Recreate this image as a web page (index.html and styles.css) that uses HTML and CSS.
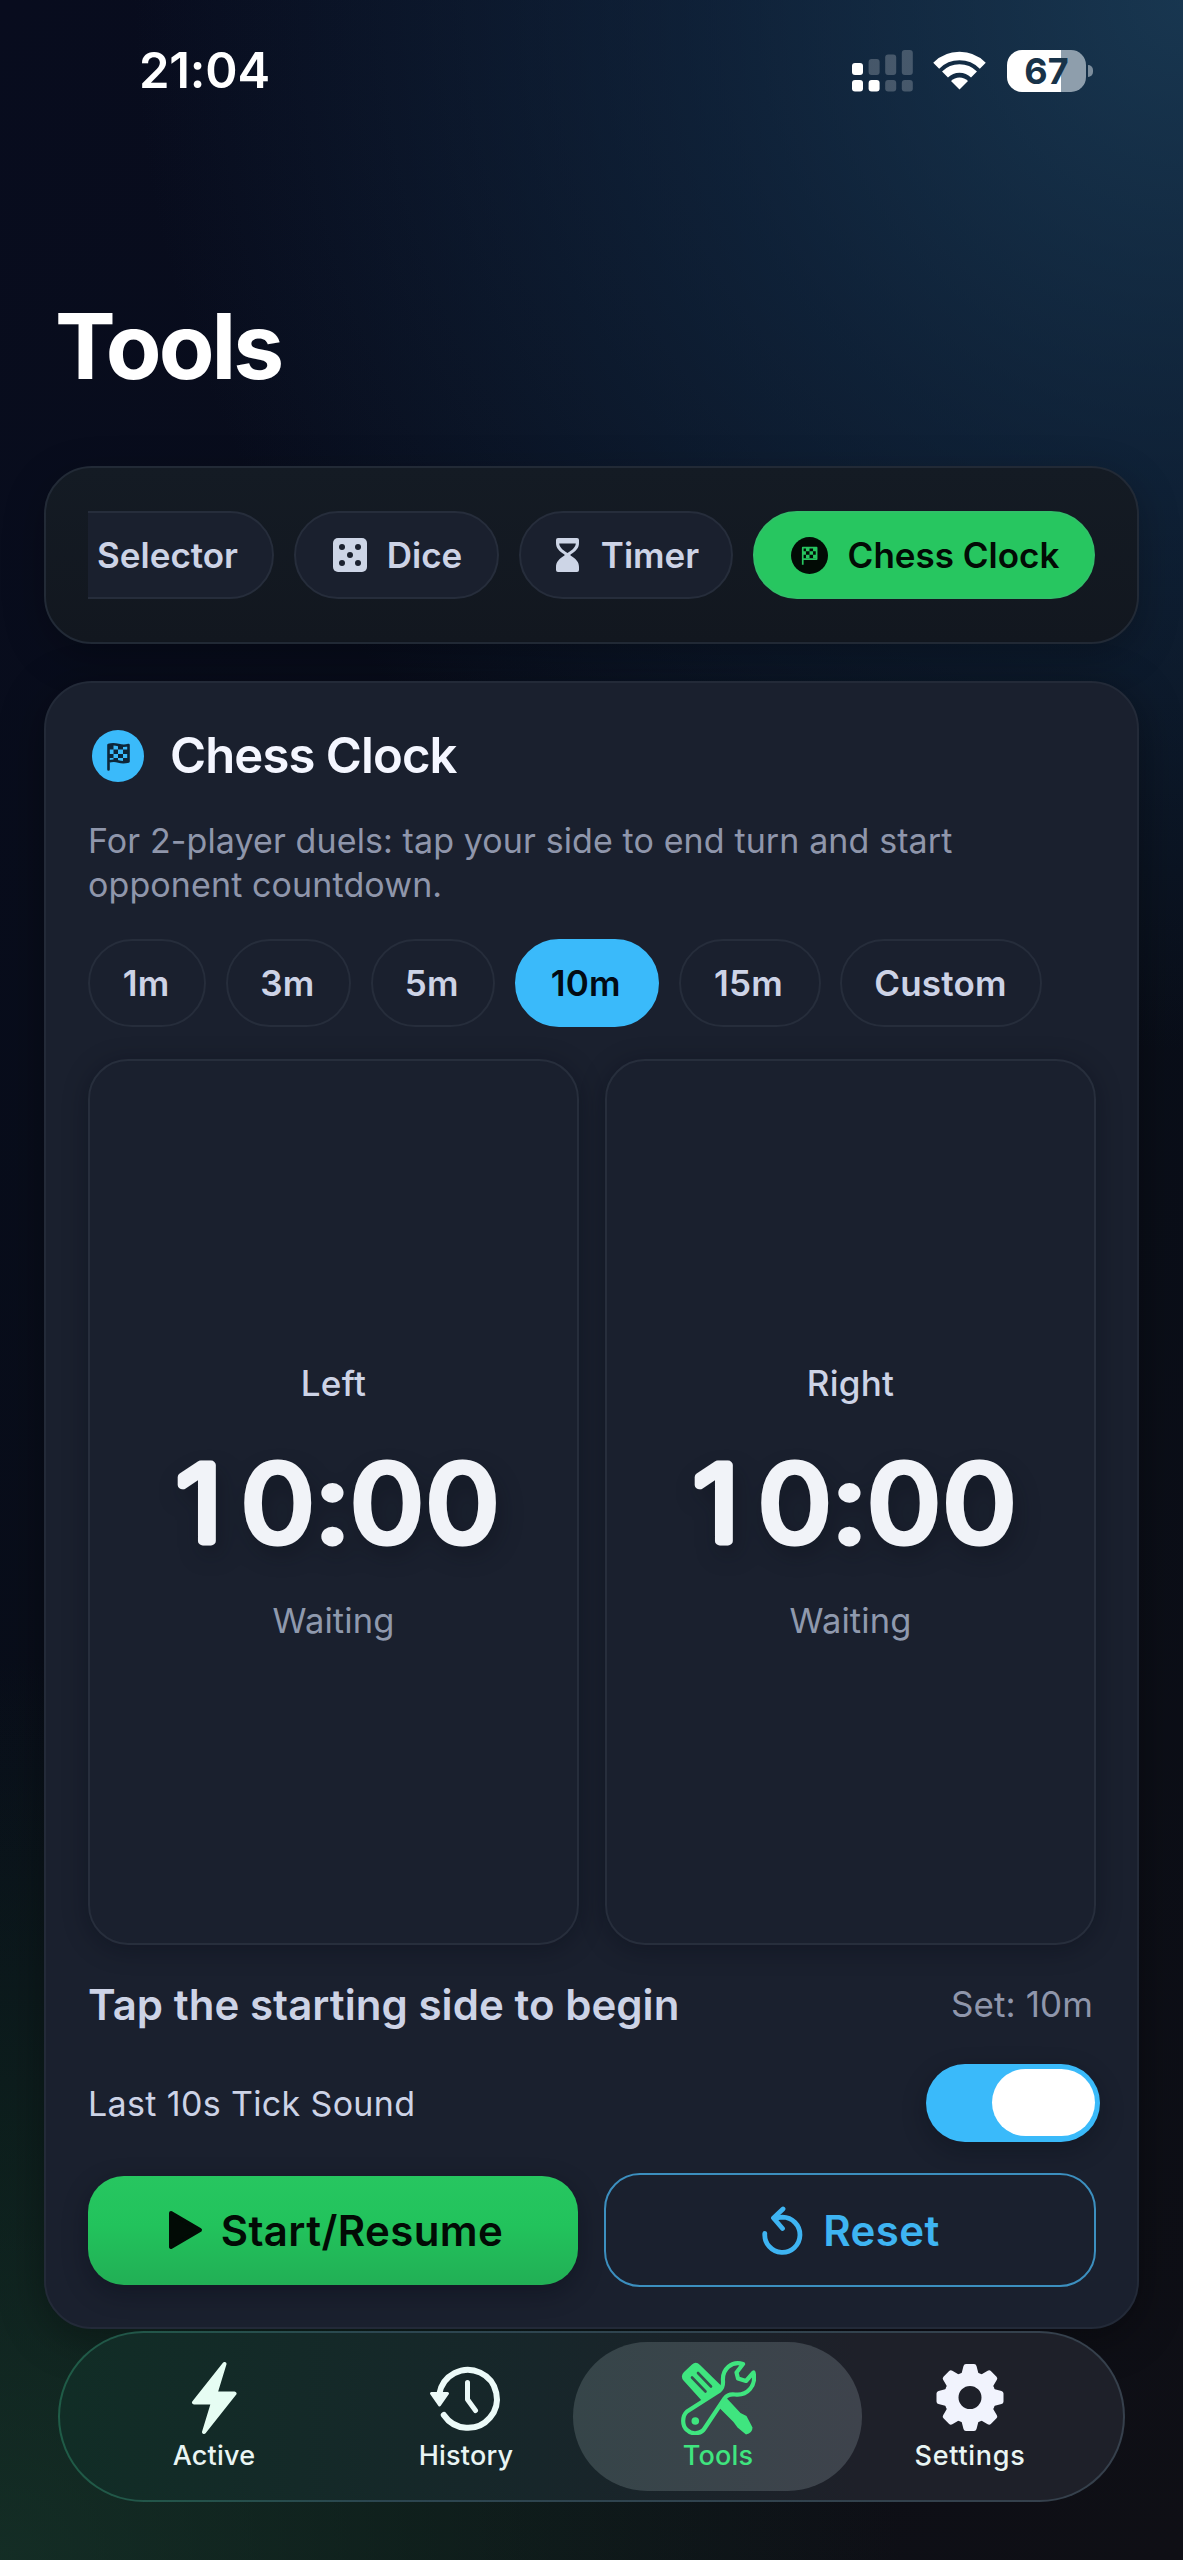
FILE: index.html
```html
<!DOCTYPE html>
<html lang="en">
<head>
<meta charset="utf-8">
<title>Tools</title>
<link rel="stylesheet" href="styles.css">
</head>
<body>
<header class="status-bar">
  <span class="time">21:04</span>
  <div class="indicators">
    <svg class="signal" width="61" height="42" viewBox="0 0 61 42">
      <g fill="#fff"><rect x="0" y="13" width="11" height="12" rx="3"/><rect x="0" y="30" width="11" height="11.5" rx="3"/><rect x="16.6" y="30" width="11" height="11.5" rx="3"/></g>
      <g fill="#fff" opacity=".22"><rect x="16.6" y="9" width="11" height="16" rx="3"/><rect x="33.2" y="4.5" width="11" height="20.5" rx="3"/><rect x="49.8" y="0" width="11" height="25" rx="3"/><rect x="33.2" y="30" width="11" height="11.5" rx="3"/><rect x="49.8" y="30" width="11" height="11.5" rx="3"/></g>
    </svg>
    <svg class="wifi" width="53" height="39" viewBox="0 0 53 39">
      <g fill="none" stroke="#fff" stroke-width="8.4"><path d="M3.2 14.7A33 33 0 0 1 49.8 14.7"/><path d="M12 23.5A20.5 20.5 0 0 1 41 23.5"/></g>
      <path fill="#fff" d="M26.5 38.5 18 30A12 12 0 0 1 35 30Z"/>
    </svg>
    <div class="battery"><span>67</span></div>
    <i class="battery-cap"></i>
  </div>
</header>

<h1 class="title">Tools</h1>

<nav class="tool-tabs">
  <div class="tool-scroll">
    <button class="chip chip-selector"><span>Selector</span></button>
    <button class="chip chip-dice">
      <svg width="34" height="34" viewBox="0 0 34 34"><path fill="#cdd5e6" d="M5 0H29A5 5 0 0 1 34 5V29A5 5 0 0 1 29 34H5A5 5 0 0 1 0 29V5A5 5 0 0 1 5 0Z"/><g fill="#1a202e"><circle cx="9" cy="9" r="3"/><circle cx="25" cy="9" r="3"/><circle cx="17" cy="17" r="3"/><circle cx="9" cy="25" r="3"/><circle cx="25" cy="25" r="3"/></g></svg>
      <span>Dice</span>
    </button>
    <button class="chip chip-timer">
      <svg width="23" height="34" viewBox="0 0 23 34"><path fill="#cdd5e6" fill-rule="evenodd" d="M2 0H21Q23 0 23 2V5C23 10 20 13 14.500 16.500V17.500C20 21 23 24 23 29V32Q23 34 21 34H2Q0 34 0 32V29C0 24 3 21 8.500 17.500V16.500C3 13 0 10 0 5V2Q0 0 2 0ZM3.200 5.500C3.500 9 6 11.500 11.500 15C17 11.500 19.500 9 19.800 5.500Z"/></svg>
      <span>Timer</span>
    </button>
    <button class="chip chip-chess">
      <svg width="37" height="37" viewBox="0 0 52 52"><circle cx="26" cy="26" r="26" fill="#020b05"/><path d="M16.500 39V15H36V31H16.500" fill="none" stroke="#27c660" stroke-width="2.400" stroke-linejoin="round"/><path fill="#27c660" d="M21 15h5v5h-5zM31 15h5v5h-5zM16 20h5v5h-5zM26 20h5v5h-5zM21 25h5v5h-5zM31 25h5v5h-5z"/></svg>
      <span>Chess Clock</span>
    </button>
  </div>
</nav>

<main class="card">
  <div class="card-head">
    <svg width="52" height="52" viewBox="0 0 52 52"><circle cx="26" cy="26" r="26" fill="#3abafa"/><path d="M16.500 39.500V15Q21 13.500 26.500 15T36.500 15V31.500Q31 33 26.500 31.500T16.500 31.500" fill="none" stroke="#0e2638" stroke-width="2.600" stroke-linecap="round" stroke-linejoin="round"/><path fill="#0e2638" d="M17 15h4.500v4.500h-4.500zM26 15h5v4.500h-5zM21.500 19.500h4.500v4.500h-4.500zM31 19.500h5v4.500h-5zM17 24h4.500v4h-4.500zM26 24h5v4h-5zM21.500 28h4.500v3.500h-4.500zM31 28h5v3.500h-5z"/></svg>
    <h2>Chess Clock</h2>
  </div>
  <p class="desc">For 2-player duels: tap your side to end turn and start<br>opponent countdown.</p>
  <div class="presets">
    <button class="chip p1">1m</button>
    <button class="chip p3">3m</button>
    <button class="chip p5">5m</button>
    <button class="chip p10">10m</button>
    <button class="chip p15">15m</button>
    <button class="chip pc">Custom</button>
  </div>
  <div class="clocks">
    <section class="clock">
      <div class="side">Left</div>
      <svg class="digits" width="340" height="110" viewBox="0 0 340 110"><text transform="scale(1.12 1)" x="31.500 101.500 150.400 199 266.500" y="93">10:00</text></svg>
      <div class="state">Waiting</div>
    </section>
    <section class="clock">
      <div class="side">Right</div>
      <svg class="digits" width="340" height="110" viewBox="0 0 340 110"><text transform="scale(1.12 1)" x="31.500 101.500 150.400 199 266.500" y="93">10:00</text></svg>
      <div class="state">Waiting</div>
    </section>
  </div>
  <div class="hint-row"><strong>Tap the starting side to begin</strong><span class="set">Set: 10m</span></div>
  <div class="sound-row"><span>Last 10s Tick Sound</span><div class="toggle"><i></i></div></div>
  <div class="actions">
    <button class="start"><svg width="35" height="40" viewBox="0 0 35 40"><path d="M3 3 32 20 3 37Z" fill="#020b05" stroke="#020b05" stroke-width="4" stroke-linejoin="round"/></svg><span>Start/Resume</span></button>
    <button class="reset"><svg width="41" height="49" viewBox="0 0 41 49"><g fill="none" stroke="#3eb4f2" stroke-width="4.800" stroke-linecap="round" stroke-linejoin="round"><path d="M2.800 27.500A17.600 17.600 0 1 0 20.400 11.200L12 12.200"/><path d="M21 3 11.500 12 20.500 22.500"/></g></svg><span>Reset</span></button>
  </div>
</main>

<nav class="tab-bar">
  <a class="tab"><svg width="46" height="74" viewBox="0 0 46 74"><path d="M33.500 3 3 41.500H22L13 71 43.500 32.500H24.500Z" fill="#e6fdf3" stroke="#e6fdf3" stroke-width="4" stroke-linejoin="round"/></svg><span>Active</span></a>
  <a class="tab"><svg width="74" height="74" viewBox="0 -5 74 74"><g fill="none" stroke="#ecfaf8" stroke-width="6" stroke-linecap="round" stroke-linejoin="round"><path d="M10.300 28A29 29 0 1 1 14.800 49"/><path d="M38.500 16.500V33.500L46.500 44.500" stroke-width="5"/></g><path d="M2.500 27.500H18.500L10.500 39Z" fill="#ecfaf8" stroke="#ecfaf8" stroke-width="3" stroke-linejoin="round"/></svg><span>History</span></a>
  <a class="tab tab-on"><svg width="75" height="74" viewBox="0 0 75 74">
    <path fill="#3fe57f" d="M11 3.500Q15 0 19 4L41 25.500 38 29.500 21.500 40.500 2.500 19.500Q-1 15 3 11ZM38 46.500 45.500 37 59.500 52 65.500 55 71.500 66.500Q71.500 72 65 73.500L56.500 66.500 52.500 61Z"/>
    <path d="M11 16.500 24.500 30.500M17 12 30 25.500" stroke="#35504d" stroke-width="2.600" stroke-linecap="round"/>
    <path d="M62 3C51 -.5 41 8 42 20C42.300 24.500 41.500 27.500 38.500 29.700L6 50.500C1 55 .8 65 6 69C11 74 20 73 23.500 67.500L43.500 37.500C46 34 50 33 54 33.500C66 35 75.500 25 72.500 11.500L65 20 57 17.500 55.500 11.500Z" fill="#3c454d" stroke="#3fe57f" stroke-width="4.200" stroke-linejoin="round"/>
    <circle cx="14.300" cy="60" r="3.800" fill="#3fe57f"/>
  </svg><span>Tools</span></a>
  <a class="tab tab-settings"><svg width="68" height="74" viewBox="-34 -36.500 68 74"><defs><path id="tooth" d="M-9.500 -20 -6.500 -31.500Q-6 -33.500 -4 -33.500H4Q6 -33.500 6.500 -31.500L9.500 -20Z"/></defs><g fill="#f1f3fd"><path fill-rule="evenodd" d="M0 -26A26 26 0 1 1 0 26A26 26 0 1 1 0 -26ZM0 -11.500A11.500 11.500 0 1 0 0 11.500A11.500 11.500 0 1 0 0 -11.500Z"/><use href="#tooth"/><use href="#tooth" transform="rotate(45)"/><use href="#tooth" transform="rotate(90)"/><use href="#tooth" transform="rotate(135)"/><use href="#tooth" transform="rotate(180)"/><use href="#tooth" transform="rotate(225)"/><use href="#tooth" transform="rotate(270)"/><use href="#tooth" transform="rotate(315)"/></g></svg><span>Settings</span></a>
</nav>
</body>
</html>
```
FILE: styles.css
```css
* { box-sizing: border-box; }
body {
  margin: 0;
  width: 1183px;
  height: 2560px;
  overflow: hidden;
  display: flex;
  flex-direction: column;
  font-family: Inter, "Liberation Sans", sans-serif;
  color: #fff;
  background:
    radial-gradient(circle 1050px at 1183px 0, rgba(30, 70, 100, .72), rgba(22, 55, 86, .48) 45%, rgba(14, 30, 55, 0)),
    radial-gradient(circle 900px at 0 2560px, rgba(26, 66, 46, .6), rgba(20, 56, 36, .42) 45%, rgba(10, 30, 20, 0)),
    linear-gradient(135deg, #080c1e, #090e19 55%, #0f0f15);
}
h1, h2, p { margin: 0; }
button { border: 0; margin: 0; padding: 0; background: none; font: inherit; color: inherit; }
svg { display: block; flex: none; }

.status-bar { height: 141px; display: flex; justify-content: space-between; padding: 0 90px 0 139px; align-items: center; }
.time { font-size: 49px; font-weight: 600; letter-spacing: -.2px; }
.indicators { display: flex; align-items: center; }
.wifi { margin-left: 20px; }
.battery {
  width: 79px; height: 42px; margin-left: 21px; border-radius: 15px;
  background: linear-gradient(90deg, #fff 68%, #8e9eac 68%);
  color: #183349; font-size: 36px; font-weight: 700; line-height: 42px; text-align: center;
}
.battery-cap { width: 5px; height: 12px; margin-left: 2px; border-radius: 0 6px 6px 0; background: #7c8d9c; }

.title { font-size: 91px; font-weight: 700; line-height: 110px; letter-spacing: -2.900px; margin: 150px 0 65px 55px; }

.tool-tabs {
  margin: 0 44px; height: 178px; padding: 43px 42px; border-radius: 48px;
  border: 2px solid #222a36; background: linear-gradient(#141b24, #12171f);
  box-shadow: 0 12px 40px rgba(0, 0, 0, .25);
}
.tool-scroll { display: flex; justify-content: flex-end; gap: 20px; overflow: hidden; }
.chip {
  flex: none; height: 88px; border-radius: 44px; border: 2px solid #262d3b; background: #1a202e;
  display: flex; align-items: center; justify-content: center;
  color: #cdd3e6; font-size: 35px; font-weight: 600; line-height: 44px; white-space: nowrap;
}
.chip-selector { width: 240px; justify-content: flex-end; padding-right: 34px; }
.chip-dice { width: 205px; gap: 20px; padding-left: 2px; }
.chip-timer { width: 214px; gap: 22px; padding-left: 3px; }
.chip-chess { width: 342px; gap: 20px; padding-left: 2px; background: #27c660; border-color: #30c068; color: #020b05; }

.card {
  margin: 37px 44px 0; height: 1648px; padding: 47px 42px 40px; border-radius: 48px;
  border: 2px solid #232a38; background: #1a202e;
  box-shadow: 0 8px 44px rgba(0, 0, 0, .35);
}
.card-head { display: flex; align-items: center; gap: 26px; height: 52px; padding-left: 4px; }
.card-head h2 { font-size: 49px; font-weight: 600; line-height: 52px; letter-spacing: -.9px; color: #f4f6ff; }
.desc { margin-top: 37px; font-size: 34px; line-height: 44px; letter-spacing: .11px; color: #8f96ab; white-space: nowrap; }
.presets { display: flex; gap: 19.900px; margin-top: 32px; }
.presets .chip { font-size: 35px; letter-spacing: .2px; padding-right: 2px; }
.p1 { width: 118px; }
.p3 { width: 125px; }
.p5 { width: 124px; }
.presets .p10 { width: 144px; background: #3abafa; border-color: #3abafa; color: #020b14; }
.p15 { width: 142px; }
.pc { width: 202px; }
.clocks { display: grid; grid-template-columns: 491px 491px; gap: 26px; margin-top: 32px; }
.clock {
  height: 886px; border: 2px solid #272e3c; border-radius: 40px; background: #1a202e;
  box-shadow: 0 4px 24px rgba(5, 10, 20, .35);
  display: flex; flex-direction: column; align-items: center; padding-top: 300px;
}
.side { font-size: 35px; font-weight: 500; line-height: 44px; letter-spacing: .3px; color: #cdd3e6; }
.digits { margin: 43px 0 41px; overflow: visible; }
.digits text {
  font-size: 104px; font-weight: 300; fill: #f1f3f8; stroke: #f1f3f8; text-anchor: middle;
  stroke-width: 8.800px; stroke-linejoin: round;
  filter: drop-shadow(4px 10px 10px rgba(5, 10, 20, .3));
}
.state { font-size: 34.500px; line-height: 44px; letter-spacing: .1px; color: #8f99ad; }
.hint-row { display: flex; justify-content: space-between; align-items: center; height: 60px; margin-top: 29px; padding-right: 2px; }
.hint-row strong { font-size: 42px; font-weight: 600; letter-spacing: .05px; color: #cdd3e6; }
.set { font-size: 35px; letter-spacing: .1px; color: #8f96ab; }
.sound-row { display: flex; justify-content: space-between; align-items: center; height: 78px; margin: 30px -5px 0 0; font-size: 34px; letter-spacing: .35px; color: #cdd3e6; }
.toggle { width: 174px; height: 78px; border-radius: 39px; background: #3abafa; padding: 5px; display: flex; justify-content: flex-end; box-shadow: 0 8px 24px rgba(5, 10, 20, .3); }
.toggle i { width: 103px; height: 67px; border-radius: 34px; background: #fff; }
.actions { display: grid; grid-template-columns: 490px 492px; gap: 26px; align-items: center; margin-top: 31px; }
.start, .reset { display: flex; align-items: center; justify-content: center; gap: 18px; height: 109px; border-radius: 36px; font-size: 42px; font-weight: 600; letter-spacing: .4px; }
.start { padding-left: 5px; background: linear-gradient(#27c660, #22c35c 45%, #22af55); color: #020b05; box-shadow: 0 8px 24px rgba(5, 10, 20, .35); }
.reset { height: 114px; gap: 20px; padding-left: 2px; border: 2.500px solid #3c8fbf; color: #3eb4f2; }

.tab-bar {
  position: relative; margin: 2px 0 0 58px; width: 1067px; height: 171px; border-radius: 86px;
  border: 2px solid transparent; padding-left: 28px; display: flex;
  background:
    linear-gradient(90deg, #112d26, #17262a 45%, #1e2029 75%) padding-box,
    linear-gradient(90deg, #1f5c47, #2c4650 30%, #36404c) border-box;
}
.tab { position: relative; width: 252px; display: flex; flex-direction: column; align-items: center; padding-top: 28px; font-size: 27px; font-weight: 500; line-height: 32px; letter-spacing: .2px; color: #e9f5f3; }
.tab span { margin-top: 5px; position: relative; }
.tab svg { position: relative; }
.tab-settings { letter-spacing: .7px; }
.tab-on { color: #3fe57f; }
.tab-on::before { content: ""; position: absolute; left: -19px; top: 9px; width: 289px; height: 149px; border-radius: 75px; background: linear-gradient(90deg, #364549, #3e434c); }
```
